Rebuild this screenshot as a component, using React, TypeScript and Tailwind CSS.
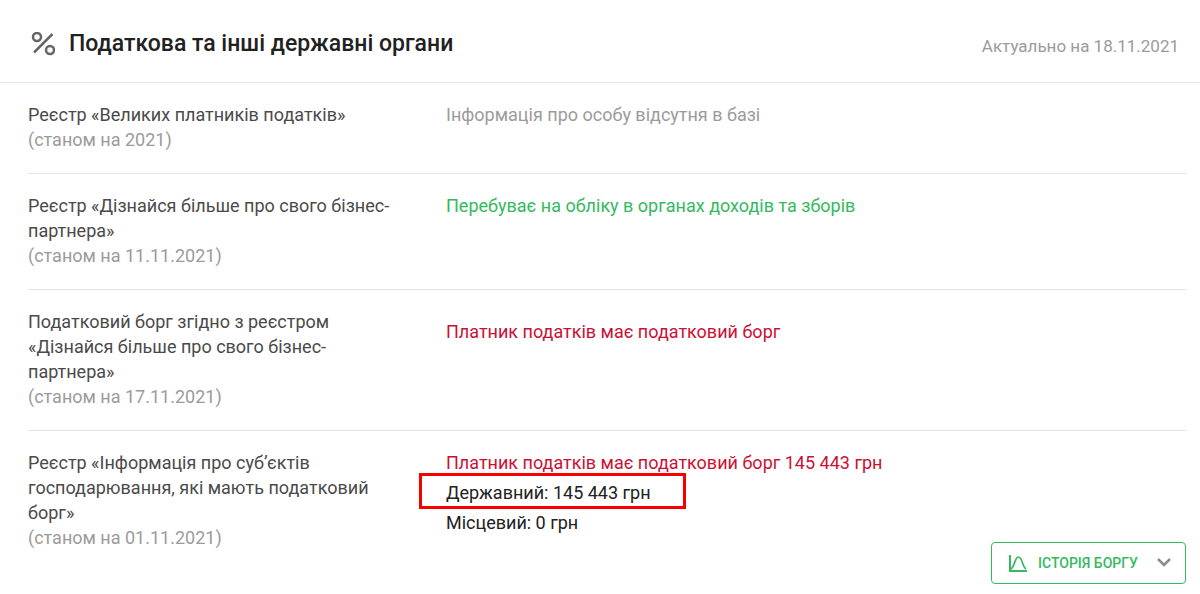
import React from 'react';

const PercentIcon = () => (
    <svg className="w-6 h-6 shrink-0" viewBox="0 0 24 24" fill="none" stroke="#666666" strokeWidth="2.5" aria-hidden="true">
        <circle cx="6" cy="5" r="4" />
        <circle cx="19" cy="18" r="4" />
        <path d="M21.5 2 3 20.500" />
    </svg>
);

const ChartIcon = () => (
    <svg className="w-[18px] h-[18px] shrink-0" viewBox="0 0 18 18" fill="none" stroke="currentColor" aria-hidden="true">
        <path d="M1 1v16h17" strokeWidth="2" />
        <path d="M2 15C6 13 5.500 3 9.500 3s3.500 10 7.500 12" strokeWidth="1.7" />
    </svg>
);

const ChevronIcon = () => (
    <svg className="w-[14px] h-[10px] shrink-0" viewBox="0 0 14 10" fill="none" stroke="#8c8c8c" strokeWidth="2.5" aria-hidden="true">
        <path d="M1 1l6 6 6-6" />
    </svg>
);

type RowProps = {
    name: string;
    date: string;
    last?: boolean;
    children: React.ReactNode;
};

const Row = ({ name, date, last, children }: RowProps) => (
    <div className={last ? 'flex pt-[19px]' : 'flex pt-[19px] pb-[21px] border-b border-[#e4e4e4]'}>
        <dt className="w-[418px] shrink-0 pr-12 text-[#4a4a4a]">
            {name}
            <span className="block text-[#9b9b9b]">({date})</span>
        </dt>
        <dd className="grow flex flex-col">{children}</dd>
    </div>
);

const App = () => {
    return (
        <main className="bg-white font-['Roboto','Noto_Sans',sans-serif] text-[18px] leading-[25px]">
            <header className="flex items-center justify-between pt-[29px] pb-[23px] pl-[31px] pr-[21px] border-b border-[#e4e4e4]">
                <div className="flex items-center gap-[14px]">
                    <PercentIcon />
                    <h1 className="text-[23px] leading-[30px] font-medium text-[#212121]">Податкова та інші державні органи</h1>
                </div>
                <p className="pt-1 text-[17px] text-[#9b9b9b]">Актуально на 18.11.2021</p>
            </header>

            <dl className="pl-7 pr-[14px] pb-[10px]">
                <Row name="Реєстр «Великих платників податків»" date="станом на 2021">
                    <p className="text-[#9b9b9b]">Інформація про особу відсутня в базі</p>
                </Row>
                <Row name="Реєстр «Дізнайся більше про свого бізнес-партнера»" date="станом на 11.11.2021">
                    <p className="text-[#35b95e]">Перебуває на обліку в органах доходів та зборів</p>
                </Row>
                <Row name="Податковий борг згідно з реєстром «Дізнайся більше про свого бізнес-партнера»" date="станом на 17.11.2021">
                    <p className="pt-[10px] text-[#cc1034]">Платник податків має податковий борг</p>
                </Row>
                <Row name="Реєстр «Інформація про суб’єктів господарювання, які мають податковий борг»" date="станом на 01.11.2021" last>
                    <p className="text-[#cc1034]">Платник податків має податковий борг 145 443 грн</p>
                    <p className="relative pt-[5px] text-[#212121]">
                        Державний: 145 443 грн
                        {/* highlight frame */}
                        <span className="absolute -left-[27px] -top-[2px] w-[267px] h-9 border-3 border-[#f80000]" />
                    </p>
                    <p className="pt-[5px] text-[#212121]">Місцевий: 0 грн</p>
                    <button
                        type="button"
                        className="self-end mt-[7px] flex items-center w-[195px] h-[42px] pl-[17px] pr-[14px] border border-[#35b95e] rounded text-[14px] font-medium text-[#35b95e]"
                    >
                        <ChartIcon />
                        <span className="pl-[11px] grow text-left whitespace-nowrap">ІСТОРІЯ БОРГУ</span>
                        <ChevronIcon />
                    </button>
                </Row>
            </dl>
        </main>
    );
};

export default App;
